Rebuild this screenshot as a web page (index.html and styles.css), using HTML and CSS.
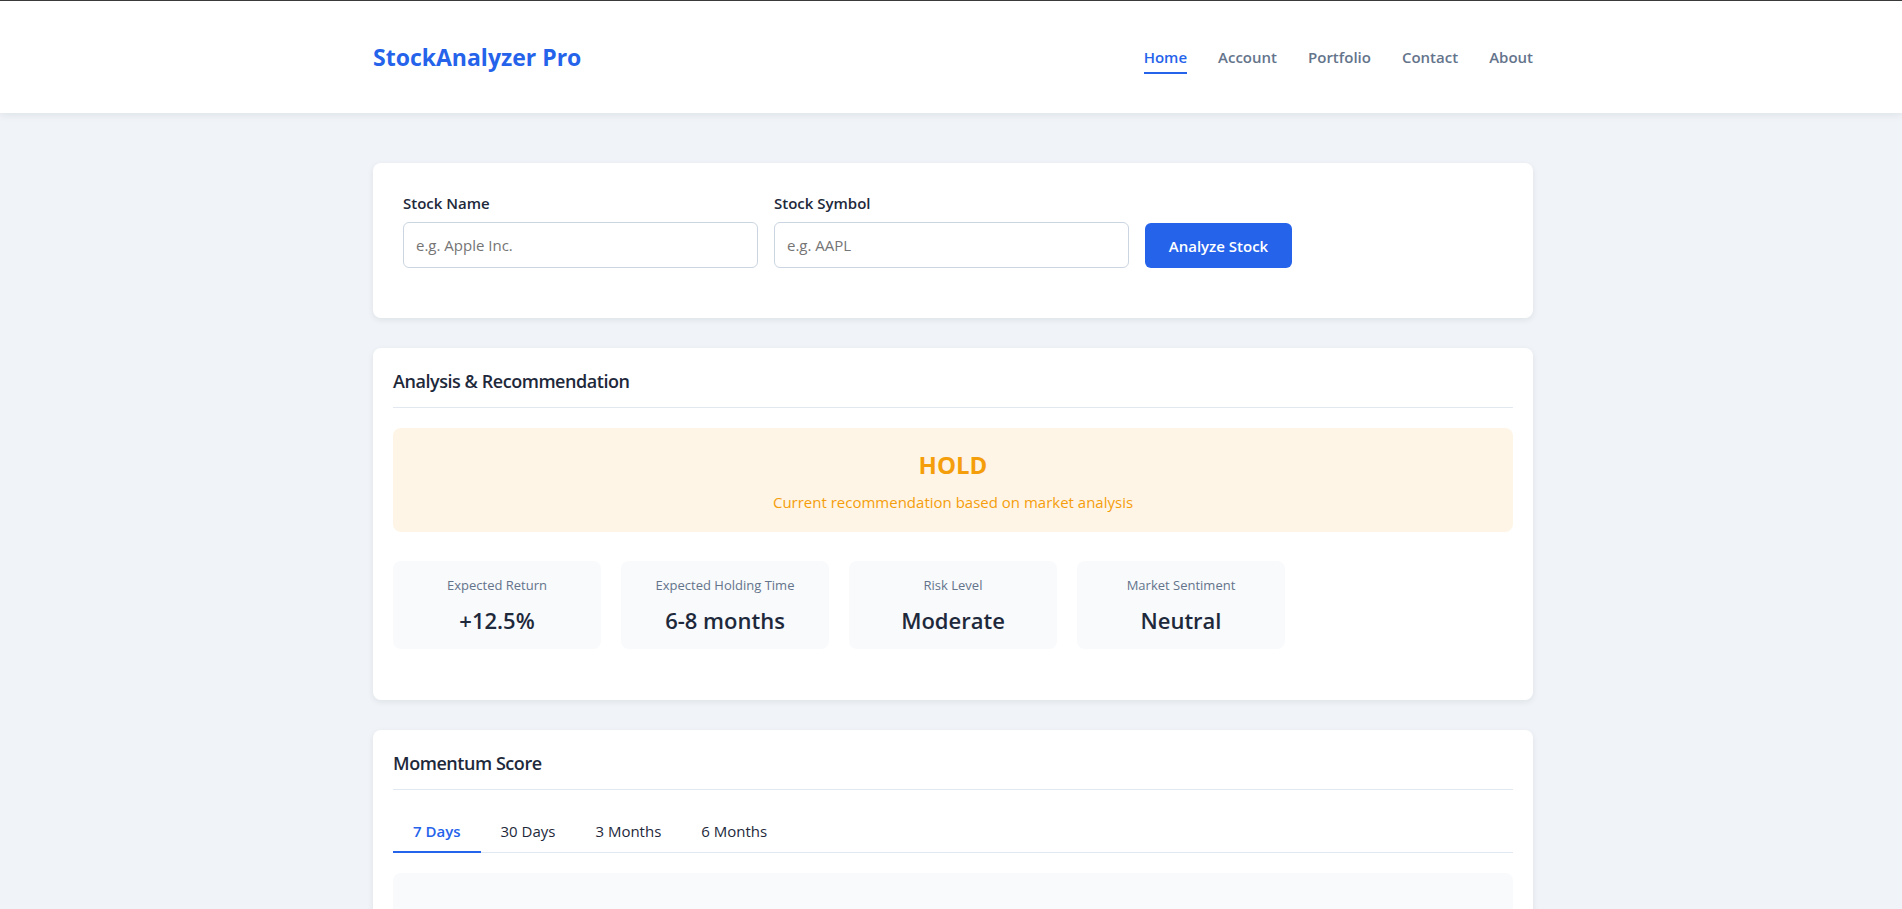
FILE: index.html
```html
<!DOCTYPE html>
<html lang="en">
<head>
<meta charset="utf-8">
<title>StockAnalyzer Pro</title>
<link rel="stylesheet" href="styles.css">
</head>
<body>
<header class="site-header">
  <div class="header-inner">
    <div class="logo">StockAnalyzer Pro</div>
    <nav class="nav">
      <a class="nav-link active" href="#">Home</a>
      <a class="nav-link" href="#">Account</a>
      <a class="nav-link" href="#">Portfolio</a>
      <a class="nav-link" href="#">Contact</a>
      <a class="nav-link" href="#">About</a>
    </nav>
  </div>
</header>

<main class="main">
  <section class="card card-form">
    <form class="search-form">
      <div class="field">
        <label class="field-label">Stock Name</label>
        <input class="field-input" type="text" placeholder="e.g. Apple Inc.">
      </div>
      <div class="field">
        <label class="field-label">Stock Symbol</label>
        <input class="field-input" type="text" placeholder="e.g. AAPL">
      </div>
      <button class="btn-primary" type="button">Analyze Stock</button>
    </form>
  </section>

  <section class="card">
    <h2 class="card-title">Analysis &amp; Recommendation</h2>
    <div class="recommendation">
      <div class="rec-value">HOLD</div>
      <div class="rec-sub">Current recommendation based on market analysis</div>
    </div>
    <div class="metrics">
      <div class="metric">
        <div class="metric-label">Expected Return</div>
        <div class="metric-value">+12.5%</div>
      </div>
      <div class="metric">
        <div class="metric-label">Expected Holding Time</div>
        <div class="metric-value">6-8 months</div>
      </div>
      <div class="metric">
        <div class="metric-label">Risk Level</div>
        <div class="metric-value">Moderate</div>
      </div>
      <div class="metric">
        <div class="metric-label">Market Sentiment</div>
        <div class="metric-value">Neutral</div>
      </div>
    </div>
  </section>

  <section class="card">
    <h2 class="card-title">Momentum Score</h2>
    <div class="tabs">
      <button class="tab active" type="button">7 Days</button>
      <button class="tab" type="button">30 Days</button>
      <button class="tab" type="button">3 Months</button>
      <button class="tab" type="button">6 Months</button>
    </div>
    <div class="chart-area"></div>
  </section>
</main>
</body>
</html>
```

FILE: styles.css
```css
* {
  box-sizing: border-box;
}

html, body {
  margin: 0;
  padding: 0;
}

body {
  background: #f0f4f8;
  font-family: "Open Sans", "Noto Sans", sans-serif;
  color: #1e293b;
}

.site-header {
  background: #ffffff;
  border-top: 1px solid #3a3a3a;
  box-shadow: 0 2px 8px rgba(15, 23, 42, 0.08);
  height: 113px;
}

.header-inner {
  max-width: 1164px;
  padding-left: 4px;
  margin: 0 auto;
  height: 100%;
  display: flex;
  align-items: center;
  justify-content: space-between;
}

.logo {
  font-size: 23px;
  font-weight: 700;
  color: #2563eb;
  line-height: 1.5;
}

.nav {
  display: flex;
  gap: 31px;
}

.nav-link {
  font-size: 15px;
  font-weight: 600;
  line-height: 24px;
  color: #64748b;
  text-decoration: none;
  padding: 5px 0 3px;
  border-bottom: 2px solid transparent;
}

.nav-link.active {
  color: #2563eb;
  border-bottom-color: #2563eb;
}

.main {
  max-width: 1164px;
  padding-left: 4px;
  margin: 0 auto;
  padding-top: 50px;
}

.card {
  background: #ffffff;
  border-radius: 8px;
  box-shadow: 0 2px 6px rgba(15, 23, 42, 0.08);
  padding: 20px;
  margin-bottom: 30px;
}

.card-form {
  padding: 30px;
}

.search-form {
  display: flex;
  align-items: flex-end;
  gap: 16px;
  margin-bottom: 20px;
}

.field {
  display: flex;
  flex-direction: column;
  width: 355px;
}

.field-label {
  font-size: 15px;
  font-weight: 600;
  line-height: 21px;
  color: #1e293b;
  margin-bottom: 8px;
}

.field-input {
  height: 46px;
  border: 1px solid #cbd5e1;
  border-radius: 6px;
  padding: 0 12px;
  font-family: inherit;
  font-size: 15px;
  color: #1e293b;
  background: #ffffff;
}

.field-input::placeholder {
  color: #757575;
}

.btn-primary {
  height: 45px;
  width: 147px;
  background: #2563eb;
  color: #ffffff;
  border: none;
  border-radius: 6px;
  font-family: inherit;
  font-size: 15px;
  font-weight: 600;
}

.card-title {
  margin: 0 0 20px;
  font-size: 18px;
  font-weight: 600;
  line-height: 27px;
  letter-spacing: -0.45px;
  color: #1e293b;
  padding-bottom: 12px;
  border-bottom: 1px solid #e2e8f0;
}

.recommendation {
  background: #fef5e7;
  border-radius: 8px;
  padding: 21px 20px 19px;
  text-align: center;
  margin-bottom: 29px;
}

.rec-value {
  font-size: 24px;
  font-weight: 700;
  line-height: 1.3;
  color: #f59e0b;
}

.rec-sub {
  margin-top: 11px;
  font-size: 15px;
  line-height: 22px;
  color: #f59e0b;
}

.metrics {
  display: grid;
  grid-template-columns: repeat(5, 1fr);
  gap: 20px;
  margin-bottom: 31px;
}

.metric {
  background: #f8fafc;
  border-radius: 8px;
  padding: 15px;
  text-align: center;
}

.metric-label {
  font-size: 13px;
  line-height: 19.5px;
  color: #64748b;
}

.metric-value {
  margin-top: 10px;
  font-size: 22px;
  font-weight: 600;
  line-height: 1.3;
  color: #1e293b;
}

.tabs {
  display: flex;
  border-bottom: 1px solid #e2e8f0;
  margin-bottom: 20px;
}

.tab {
  background: none;
  border: none;
  border-bottom: 2px solid transparent;
  margin-bottom: -1px;
  padding: 10px 20px 9px;
  font-family: inherit;
  font-size: 15px;
  line-height: 22px;
  color: #1e293b;
}

.tab.active {
  color: #2563eb;
  font-weight: 600;
  border-bottom-color: #2563eb;
}

.chart-area {
  background: #f8fafc;
  border-radius: 8px;
  height: 320px;
}
```
